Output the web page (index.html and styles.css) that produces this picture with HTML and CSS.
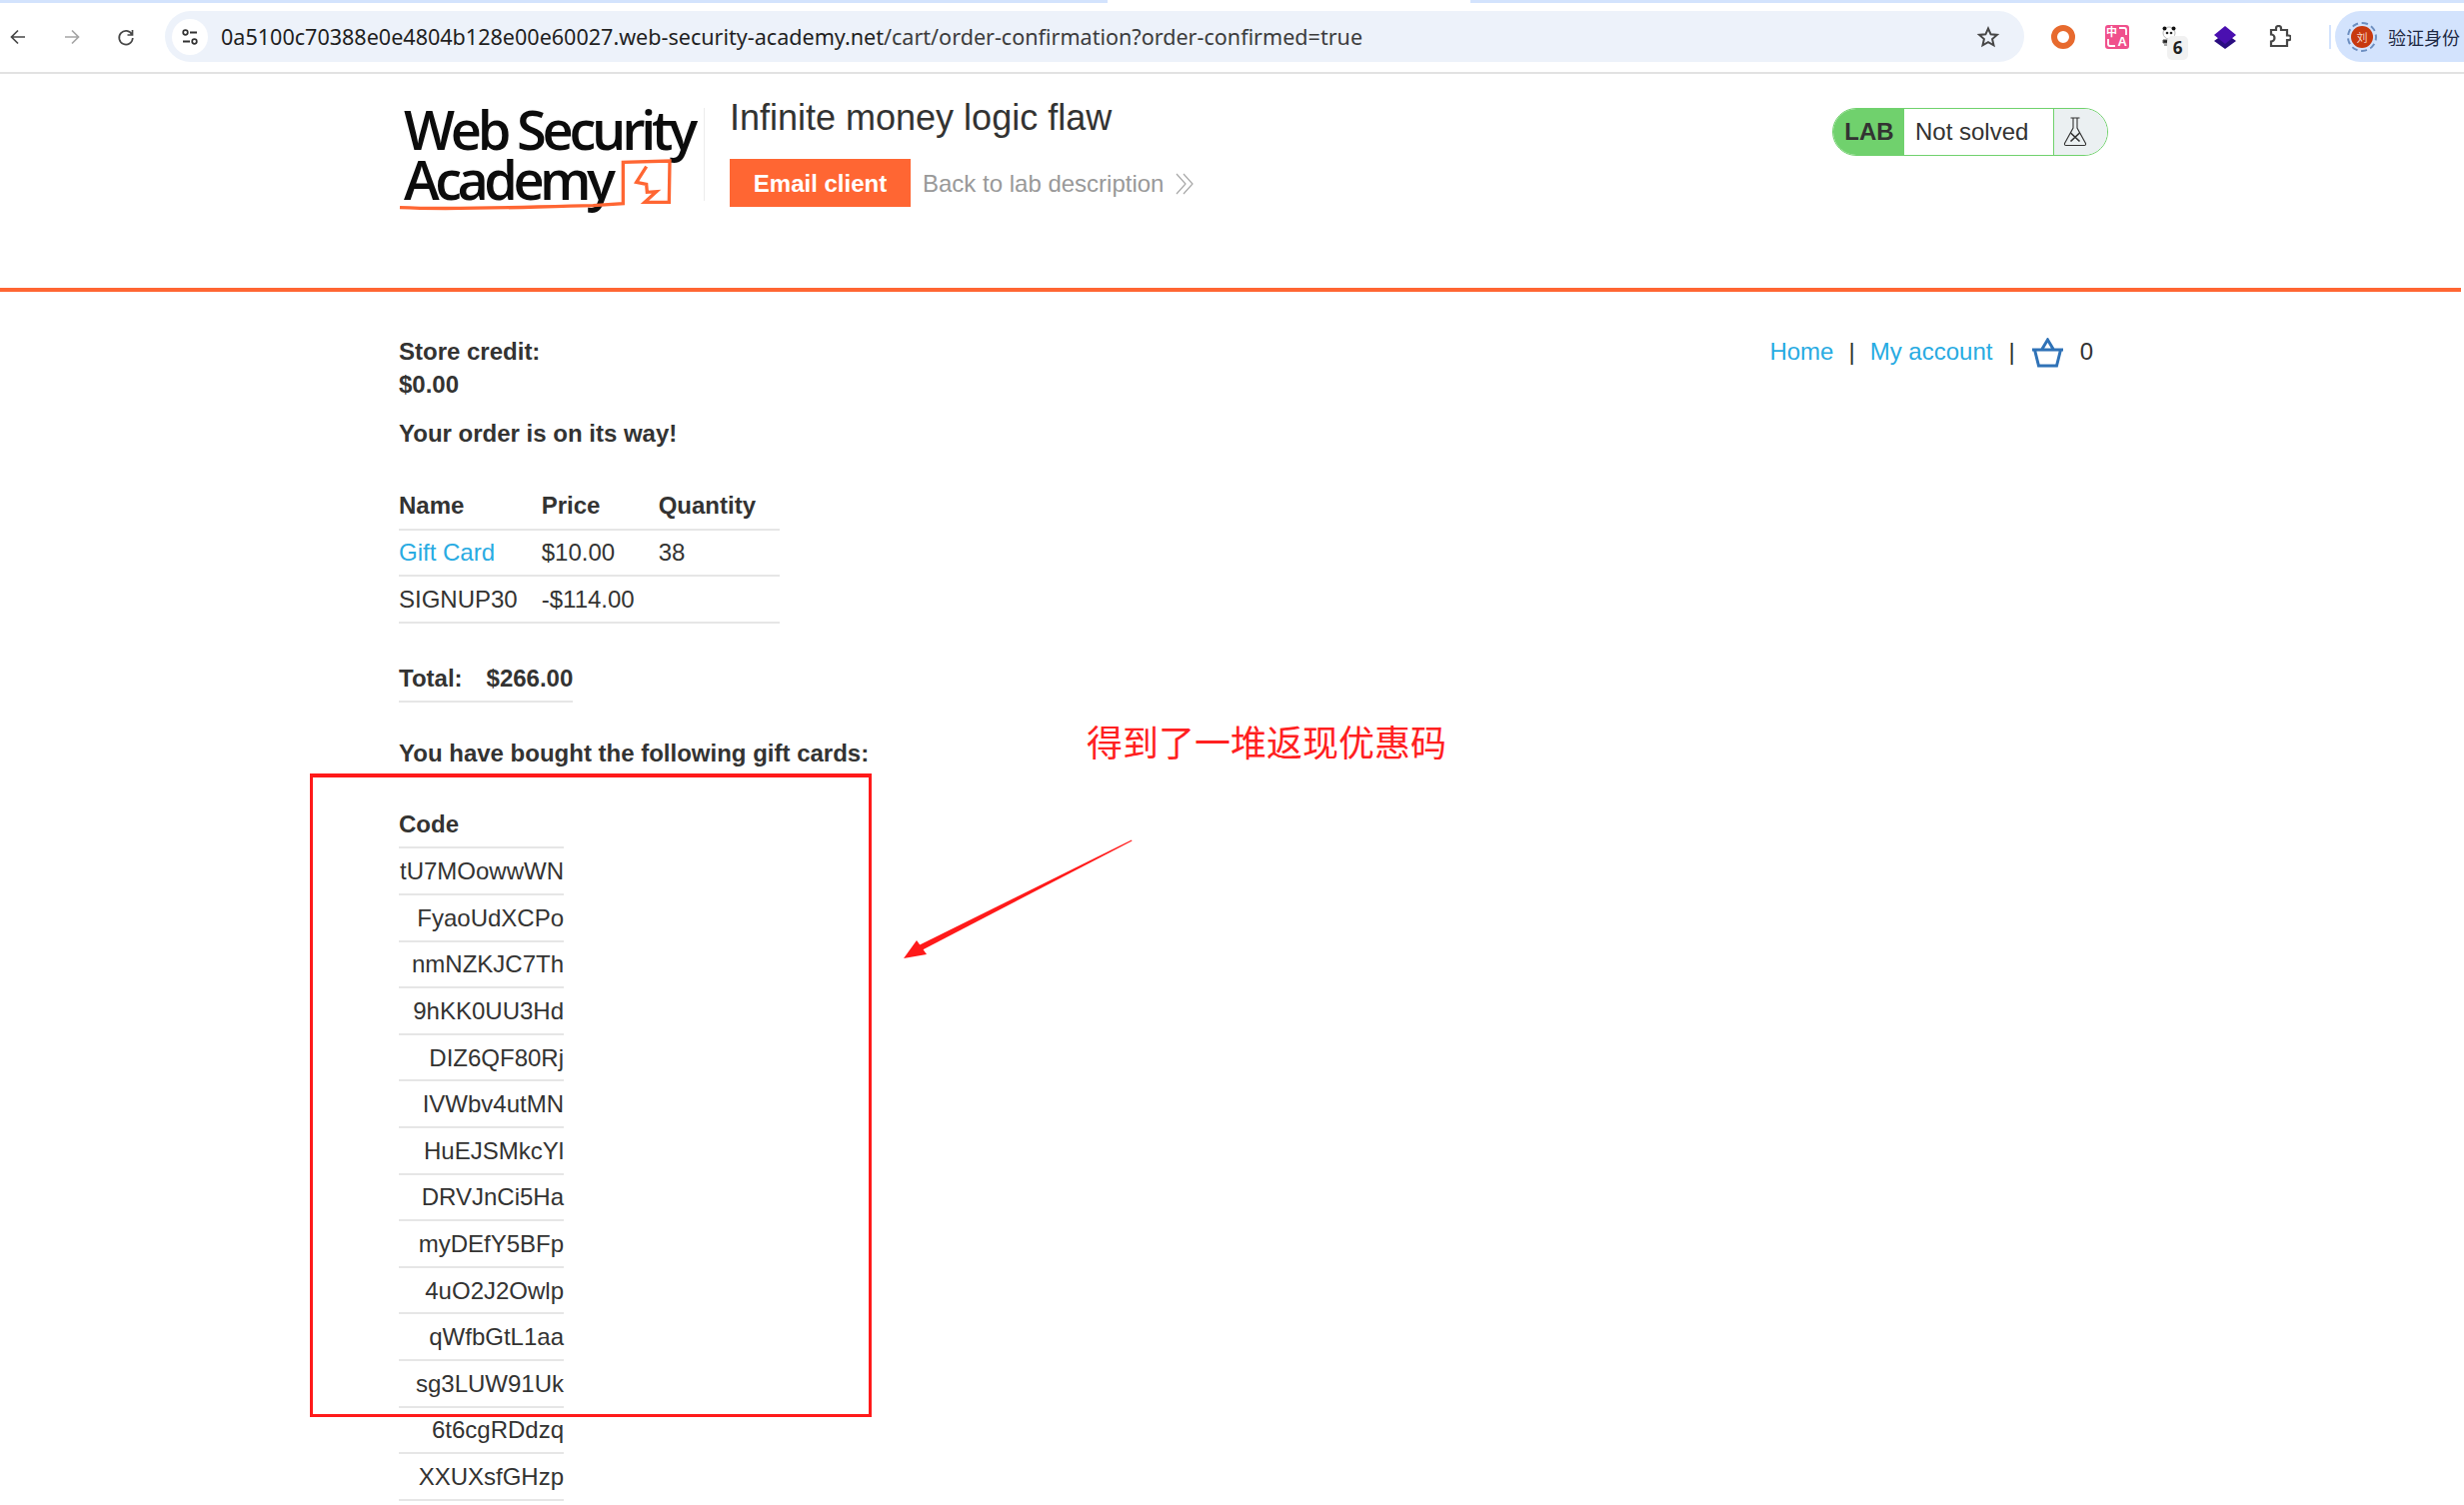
FILE: index.html
```html
<!DOCTYPE html>
<html lang="en">
<head>
<meta charset="utf-8">
<title>Infinite money logic flaw</title>
<link rel="stylesheet" href="styles.css">
</head>
<body>
<div class="tabstrip"><span class="tab-a"></span><span class="tab-gap"></span><span class="tab-b"></span></div>
<div class="toolbar">
  <div class="navbtns">
    <svg class="nav-ic" viewBox="0 0 20 20"><path d="M17 10H4M10 3.500 3.500 10l6.500 6.500" fill="none" stroke="#474747" stroke-width="1.700"/></svg>
    <svg class="nav-ic" viewBox="0 0 20 20"><path d="M3 10h13M10 3.500l6.500 6.500-6.500 6.500" fill="none" stroke="#a5a5a5" stroke-width="1.700"/></svg>
    <svg class="nav-ic" viewBox="0 0 20 20"><path d="M16 7.500A6.800 6.800 0 1 0 16.800 11M16.500 3v5h-5" fill="none" stroke="#474747" stroke-width="1.700"/></svg>
  </div>
  <div class="omnibox">
    <span class="site-ic"><svg viewBox="0 0 20 20" width="20" height="20"><path d="M10 5.500h7M3 14.500h7" stroke="#333" stroke-width="1.800" fill="none"/><circle cx="5.500" cy="5.500" r="2.300" fill="none" stroke="#333" stroke-width="1.700"/><circle cx="14.500" cy="14.500" r="2.300" fill="none" stroke="#333" stroke-width="1.700"/></svg></span>
    <span class="url">0a5100c70388e0e4804b128e00e60027.web-security-academy.net<span class="url-path">/cart/order-confirmation?order-confirmed=true</span></span>
    <svg class="star" viewBox="0 0 24 24"><path d="M12 3.500l2.600 5.800 6.300.6-4.800 4.200 1.400 6.200-5.500-3.200-5.500 3.200 1.400-6.200-4.800-4.200 6.300-.6z" fill="none" stroke="#474747" stroke-width="2"/></svg>
  </div>
  <div class="exts">
    <svg class="ext" viewBox="0 0 24 24"><circle cx="12" cy="12" r="9" fill="none" stroke="#e76a2e" stroke-width="6"/></svg>
    <span class="ext-trans"><svg class="trans-br" viewBox="0 0 24 24"><path d="M14 3h5q2 0 2 2v5M3 14v5q0 2 2 2h5" fill="none" stroke="#fff" stroke-width="1.800"/></svg><span class="zh">中</span><span class="en">A</span></span>
    <span class="ext-panda">
      <svg class="ext" viewBox="0 0 24 24"><circle cx="10" cy="8" r="6" fill="#fff" stroke="#bbb"/><circle cx="5.500" cy="3.500" r="2" fill="#111"/><circle cx="14.500" cy="3.500" r="2" fill="#111"/><circle cx="8" cy="8" r="1.300" fill="#222"/><circle cx="12" cy="8" r="1.300" fill="#222"/><path d="M4 15h11v3H4zM5 20h9" fill="#222" stroke="#555"/></svg>
      <span class="badge">6</span>
    </span>
    <svg class="ext" viewBox="0 0 24 24"><path d="M12 8 23 16 12 24 1 16z" fill="#2a0d80"/><path d="M12 1 23 10 12 19 1 10z" fill="#4a0fb0"/></svg>
    <svg class="ext" viewBox="0 0 24 24"><path d="M4 5h5V3.500a2.500 2.500 0 0 1 5 0V5h6v5.500h1.500a2.300 2.300 0 0 1 0 4.600H20V21H4v-4.500a3.500 3.500 0 0 0 0-7z" fill="none" stroke="#474747" stroke-width="2.200"/></svg>
    <span class="sep"></span>
  </div>
  <div class="profile">
    <span class="avatar"><span class="avatar-in">刘</span></span>
    <span class="profile-txt">验证身份</span>
  </div>
</div>

<header class="lab-header">
  <div class="lab-inner">
    <div class="logo">
      <div class="logo-l1">Web Security</div>
      <div class="logo-l2">Academy</div>
      <svg class="logo-mark" viewBox="0 0 960 375"><path d="M30 338C200 346 400 336 610 332L700 326 700 202 840 198 838 322 765 322 800 290 772 292 770 268 740 262 770 215" fill="none" stroke="#ff6633" stroke-width="10"/></svg>
    </div>
    <div class="lab-title">
      <h2 class="title">Infinite money logic flaw</h2>
      <div class="title-row">
        <a class="btn-email">Email client</a>
        <a class="back">Back to lab description
          <svg class="chev" viewBox="0 0 20 22" preserveAspectRatio="none"><path d="M2 1l9 10-9 10M9 1l9 10-9 10" fill="none" stroke="#a8a8a8" stroke-width="1.200"/></svg>
        </a>
      </div>
    </div>
    <div class="status">
      <span class="status-lab">LAB</span>
      <span class="status-txt">Not solved</span>
      <span class="status-ic"><svg viewBox="0 0 24 32" width="24" height="32"><path d="M7.500 2h9M10 2v10L1.500 27.500q-.5 2 1.500 2h18q2 0 1.500-2L14 12V2" fill="none" stroke="#333" stroke-width="1.100"/><path d="M7.500 17l9 8.500M16.500 17l-9 8.500" stroke="#333" stroke-width="1.700"/></svg></span>
    </div>
  </div>
</header>

<main class="content">
  <div class="topline">
    <div class="credit"><strong>Store credit:</strong><br><strong>$0.00</strong></div>
    <nav class="links">
      <a>Home</a><span class="pipe">|</span><a>My account</a><span class="pipe">|</span>
      <svg class="cart" viewBox="0 0 34 30"><path d="M1.500 12h31M4 12l4 16h18l4-16M11 12l6-10 6 10" fill="none" stroke="#2f72b7" stroke-width="3"/></svg>
      <span class="cart-n">0</span>
    </nav>
  </div>
  <p class="msg"><strong>Your order is on its way!</strong></p>

  <table class="tbl order">
    <tr><th>Name</th><th>Price</th><th>Quantity</th></tr>
    <tr><td><a>Gift Card</a></td><td>$10.00</td><td>38</td></tr>
    <tr><td>SIGNUP30</td><td>-$114.00</td><td></td></tr>
  </table>

  <table class="tbl total">
    <tr><th>Total:</th><th>$266.00</th></tr>
  </table>

  <p class="msg bought"><strong>You have bought the following gift cards:</strong></p>

  <table class="tbl codes">
    <tr><th>Code</th></tr>
    <tr><td>tU7MOowwWN</td></tr>
    <tr><td>FyaoUdXCPo</td></tr>
    <tr><td>nmNZKJC7Th</td></tr>
    <tr><td>9hKK0UU3Hd</td></tr>
    <tr><td>DIZ6QF80Rj</td></tr>
    <tr><td>IVWbv4utMN</td></tr>
    <tr><td>HuEJSMkcYl</td></tr>
    <tr><td>DRVJnCi5Ha</td></tr>
    <tr><td>myDEfY5BFp</td></tr>
    <tr><td>4uO2J2Owlp</td></tr>
    <tr><td>qWfbGtL1aa</td></tr>
    <tr><td>sg3LUW91Uk</td></tr>
    <tr><td>6t6cgRDdzq</td></tr>
    <tr><td>XXUXsfGHzp</td></tr>
  </table>
</main>

<div class="note-box"></div>
<div class="note-text">得到了一堆返现优惠码</div>
<svg class="note-arrow" viewBox="0 0 2465 1506"><path d="M1132 840.500 1132.500 841.500 920 952 917 947z" fill="#ff1a1a"/><path d="M904 959 917 941 927 955z" fill="#ff1a1a"/></svg>
</body>
</html>
```

FILE: styles.css
```css
* { box-sizing: border-box; }
html, body { margin: 0; padding: 0; height: 1506px; overflow: hidden; background: #fff; }
body { position: relative; font-family: "Liberation Sans", Arial, sans-serif; font-size: 24px; color: #333332; }

.tabstrip { display: flex; height: 3px; background: #fff; }
.tab-a { width: 1108px; background: #d3e3fd; }
.tab-gap { width: 363px; }
.tab-b { flex: 1; background: #d3e3fd; }

.toolbar { display: flex; align-items: center; height: 71px; padding-bottom: 2px; border-bottom: 2px solid #e2e2e2; background: #fff; }
.navbtns { display: flex; width: 165px; padding-left: 8px; gap: 34px; align-items: center; }
.nav-ic { width: 20px; height: 20px; }
.omnibox { display: flex; align-items: center; width: 1860px; height: 51px; background: #edf2fa; border-radius: 26px; padding: 0 24px 0 7px; }
.site-ic { display: flex; align-items: center; justify-content: center; width: 36px; height: 36px; border-radius: 50%; background: #fff; flex: none; }
.url { flex: 1; margin-left: 13px; font-family: "Noto Sans", Roboto, sans-serif; font-size: 21.560px; color: #1f1f1f; white-space: nowrap; }
.url-path { color: #3c3c3c; }
.star { width: 24px; height: 24px; flex: none; }

.exts { display: flex; align-items: center; flex: none; width: 311px; padding-left: 27px; }
.ext { width: 24px; height: 24px; flex: none; }
.exts > * { margin-right: 30px; }
.exts > .sep { width: 2px; height: 24px; background: #d3e3fd; margin: 0 0 0 8px; }
.ext-trans { position: relative; width: 24px; height: 24px; background: #f0508c; border-radius: 3px; color: #fff; flex: none; overflow: hidden; }
.trans-br { position: absolute; left: 0; top: 0; width: 24px; height: 24px; }
.ext-trans .zh { position: absolute; left: 1px; top: -4px; font: 700 11px/20px "Noto Sans CJK SC", sans-serif; }
.ext-trans .en { position: absolute; right: 2px; bottom: 0; font: bold 13px/14px "Liberation Sans", sans-serif; }
.ext-panda { position: relative; width: 24px; height: 24px; flex: none; }
.badge { position: absolute; left: 8px; top: 11px; width: 21px; height: 24px; background: #f1f1f1; border-radius: 5px; font: bold 17px "Noto Sans", sans-serif; color: #1f1f1f; text-align: center; line-height: 24px; }

.profile { display: flex; align-items: center; flex: 1; height: 51px; background: #d3e3fd; border-radius: 26px 0 0 26px; padding-left: 12px; overflow: hidden; }
.avatar { display: flex; align-items: center; justify-content: center; width: 30px; height: 30px; border-radius: 50%; border: 2px dashed #6c8ec0; flex: none; }
.avatar-in { width: 22px; height: 22px; border-radius: 50%; background: #c8390f; color: #f5d5c5; font: 11px/22px "Noto Sans CJK SC", sans-serif; text-align: center; }
.profile-txt { margin-left: 11px; font: 18px "Noto Sans CJK SC", sans-serif; color: #1f2a44; white-space: nowrap; }

.lab-header { height: 218px; border-bottom: 4px solid #ff6633; margin-right: 3px; background: #fff; }
.lab-inner { display: flex; align-items: flex-start; width: 1710px; margin-left: 399px; position: relative; }

.logo { position: relative; width: 306px; height: 120px; margin-top: 21px; margin-right: 25px; padding: 9px 0 0 5px; font-family: "Open Sans", Lato, sans-serif; font-weight: 600; color: #0c0c0c; font-size: 54px; letter-spacing: -4.200px; line-height: 50px; }
.logo::after { content: ""; position: absolute; top: 13px; right: 0; width: 1px; height: 93px; background: #ececec; }
.logo-l1, .logo-l2 { white-space: nowrap; }
.logo-l2 { letter-spacing: -4.500px; }
.logo-mark { position: absolute; left: -9px; top: 0; width: 320px; height: 125px; }

.lab-title { width: 400px; }
.title { margin: 24px 0 0; font-size: 36px; font-weight: 400; line-height: 40px; color: #333332; white-space: nowrap; }
.title-row { display: flex; align-items: center; margin-top: 21px; }
.btn-email { display: block; width: 181px; height: 48px; background: #ff6633; color: #fff; font-weight: 700; font-size: 24px; line-height: 49px; text-align: center; flex: none; }
.back { display: flex; align-items: center; margin-left: 12px; padding-top: 2px; color: #999; white-space: nowrap; }
.chev { width: 20px; height: 22px; margin-left: 11px; }

.status { position: absolute; left: 1434px; top: 34px; display: flex; width: 276px; height: 48px; border: 1px solid #70d16d; border-radius: 24px; overflow: hidden; background: #fff; }
.status-lab { width: 72px; margin: -1px 0 -1px -1px; background: #70d16d; color: #333332; font-weight: 700; text-align: center; line-height: 48px; padding-left: 2px; flex: none; }
.status-txt { width: 150px; padding-left: 11px; line-height: 46px; border-right: 1px solid #70d16d; flex: none; }
.status-ic { flex: 1; display: flex; align-items: center; justify-content: flex-start; padding-left: 9px; background: #ebf0f2; }

.content { width: 1710px; margin-left: 399px; padding-top: 43px; line-height: 33px; }
.topline { display: flex; justify-content: space-between; align-items: flex-start; }
.credit { line-height: 33px; }
.links { display: flex; align-items: center; height: 33px; padding-right: 15px; color: #333332; }
.links a { color: #29abe2; }
.pipe { margin: 0 15px; }
.pipe:nth-of-type(2) { margin-left: 16px; margin-right: 16px; }
.cart { width: 35px; height: 30px; margin: 2px -1px 0; }
.cart-n { margin-left: 16px; }

.msg { margin: 16px 0 0; }
.tbl { border-collapse: collapse; margin: 0; }
.tbl th, .tbl td { padding: 0 24px 0 0; height: 46.600px; border-bottom: 2px solid #e6e6e6; text-align: left; line-height: 33px; white-space: nowrap; }
.tbl th { font-weight: 700; }
.tbl a { color: #29abe2; }
.order { margin-top: 33px; width: 381px; }
.total { margin-top: 32px; }
.total th:last-child { padding-right: 0; }
.bought { margin-top: 33.500px; }
.codes { margin-top: 32px; }
.codes th, .codes td { padding: 0 0 0 1px; text-align: right; height: 46.600px; }
.codes th { padding-left: 0; text-align: left; }

.note-box { position: absolute; left: 310px; top: 774px; width: 562px; height: 644px; border: 3px solid #ff1a1a; border-top-width: 4px; }
.note-text { position: absolute; left: 1087px; top: 715px; font: 36px/52px "Noto Sans CJK SC", sans-serif; color: #ff2020; white-space: nowrap; }
.note-arrow { position: absolute; left: 0; top: 0; width: 2465px; height: 1506px; pointer-events: none; }
```
